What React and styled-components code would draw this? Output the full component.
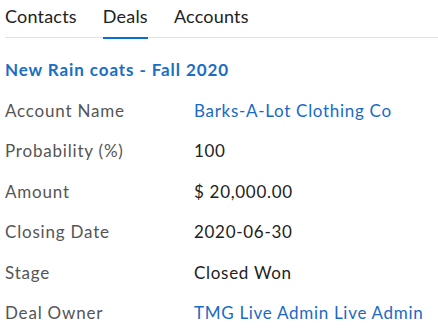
import React from "react";
import styled, { createGlobalStyle } from "styled-components";

const Global = createGlobalStyle`
  html, body { margin: 0; padding: 0; background: #fff; }
  body { font-family: Lato, "Open Sans", sans-serif; }
`;

const Page = styled.div`
  padding: 0 0 0 5px;
  width: 433px;
`;

const Tabs = styled.nav`
  display: flex;
  gap: 26px;
  border-bottom: 1px solid #e2e2e2;
  height: 37px;
`;

const Tab = styled.div`
  font-size: 18px;
  letter-spacing: 0.2px;
  line-height: 22px;
  color: #222;
  padding-top: 5px;
  height: 32px;
  box-sizing: content-box;
  border-bottom: 2px solid ${(p) => (p.$active ? "#0a6ed8" : "transparent")};
  margin-bottom: -1px;
`;

const Title = styled.h2`
  margin: 20px 0 0 0;
  font-size: 17px;
  font-weight: 700;
  letter-spacing: 0.9px;
  color: #1a6ec4;
  line-height: 24px;
`;

const Fields = styled.div`
  display: grid;
  grid-template-columns: 189px 1fr;
  grid-auto-rows: 40.5px;
  margin-top: 8px;
  align-items: center;
`;

const Label = styled.div`
  font-size: 17px;
  letter-spacing: 0.8px;
  color: #555;
`;

const Value = styled.div`
  font-size: 17px;
  letter-spacing: 0.7px;
  color: ${(p) => (p.$link ? "#1a6ac4" : "#222")};
`;

const rows = [
  ["Account Name", "Barks-A-Lot Clothing Co", true],
  ["Probability (%)", "100"],
  ["Amount", "$ 20,000.00"],
  ["Closing Date", "2020-06-30"],
  ["Stage", "Closed Won"],
  ["Deal Owner", "TMG Live Admin Live Admin", true],
];

export default function App() {
  return (
    <Page>
      <Global />
      <Tabs>
        <Tab>Contacts</Tab>
        <Tab $active>Deals</Tab>
        <Tab>Accounts</Tab>
      </Tabs>
      <Title>New Rain coats - Fall 2020</Title>
      <Fields>
        {rows.map(([l, v, link]) => (
          <React.Fragment key={l}>
            <Label>{l}</Label>
            <Value $link={link}>{v}</Value>
          </React.Fragment>
        ))}
      </Fields>
    </Page>
  );
}
